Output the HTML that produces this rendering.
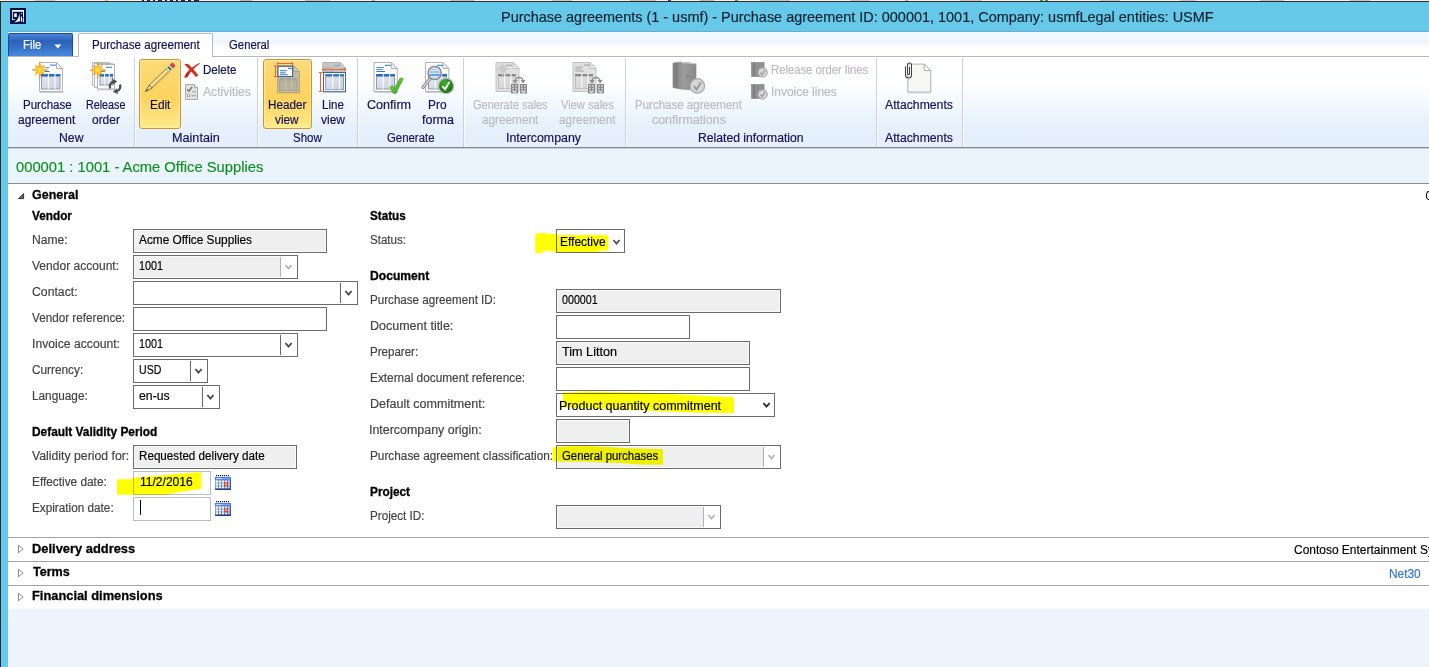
<!DOCTYPE html>
<html><head><meta charset="utf-8"><title>Purchase agreements</title>
<style>
html,body{margin:0;padding:0;}
body{width:1429px;height:667px;overflow:hidden;position:relative;background:#eef4fd;font-family:"Liberation Sans",sans-serif;}
.a{position:absolute;}
.t{position:absolute;white-space:pre;transform-origin:0 0;font-family:"Liberation Sans",sans-serif;}
.sep{position:absolute;top:58px;width:1px;height:89px;background:#ccd2da;box-shadow:1px 0 0 rgba(255,255,255,.75);}
.sep2{position:absolute;top:58px;width:1px;height:89px;background:rgba(255,255,255,.85);}
.fld{position:absolute;box-sizing:border-box;height:24px;border:1px solid #6b6b6b;background:#fff;}
.fld.d{background:#efefef;box-shadow:inset 0 0 0 1px #fafafa;}
.fld.lt{border-color:#b7bcc5;}
.vs{position:absolute;top:1px;width:1px;height:20px;background:#666;}
.wb{position:absolute;top:0;right:0;width:17px;height:22px;background:#fff;}
.vs.g{background:#aab2bb;}
.hl{position:absolute;left:0;top:0;}
.line{position:absolute;left:8px;width:1421px;height:1px;background:#a2a2a2;}
</style></head><body>
<!-- window chrome -->
<div class="a" style="left:0;top:0;width:1429px;height:1px;background:#f3f3f3"></div><div class="a" style="left:35px;top:0;width:20px;height:1px;background:#c8c8c8"></div><div class="a" style="left:105px;top:0;width:3px;height:1px;background:#e0c060"></div><div class="a" style="left:142px;top:0;width:2px;height:1px;background:#20206a"></div><div class="a" style="left:147px;top:0;width:3px;height:1px;background:#20206a"></div><div class="a" style="left:153px;top:0;width:2px;height:1px;background:#20206a"></div><div class="a" style="left:158px;top:0;width:4px;height:1px;background:#20206a"></div><div class="a" style="left:165px;top:0;width:2px;height:1px;background:#20206a"></div><div class="a" style="left:170px;top:0;width:3px;height:1px;background:#20206a"></div><div class="a" style="left:176px;top:0;width:2px;height:1px;background:#20206a"></div><div class="a" style="left:181px;top:0;width:4px;height:1px;background:#20206a"></div><div class="a" style="left:188px;top:0;width:3px;height:1px;background:#20206a"></div><div class="a" style="left:194px;top:0;width:5px;height:1px;background:#20206a"></div><div class="a" style="left:240px;top:0;width:12px;height:1px;background:#b8b8b8"></div><div class="a" style="left:305px;top:0;width:25px;height:1px;background:#c4c4c4"></div><div class="a" style="left:372px;top:0;width:3px;height:1px;background:#b0b0b0"></div><div class="a" style="left:450px;top:0;width:24px;height:1px;background:#c0c0c0"></div><div class="a" style="left:552px;top:0;width:20px;height:1px;background:#c6c6c6"></div><div class="a" style="left:630px;top:0;width:26px;height:1px;background:#c2c2c2"></div><div class="a" style="left:668px;top:0;width:3px;height:1px;background:#3a3a8a"></div><div class="a" style="left:700px;top:0;width:14px;height:1px;background:#bcbcbc"></div><div class="a" style="left:735px;top:0;width:3px;height:1px;background:#50a050"></div><div class="a" style="left:760px;top:0;width:30px;height:1px;background:#c4c4c4"></div><div class="a" style="left:850px;top:0;width:20px;height:1px;background:#c8c8c8"></div><div class="a" style="left:905px;top:0;width:3px;height:1px;background:#b0b0b0"></div><div class="a" style="left:960px;top:0;width:22px;height:1px;background:#c6c6c6"></div><div class="a" style="left:1040px;top:0;width:3px;height:1px;background:#40a040"></div><div class="a" style="left:1045px;top:0;width:3px;height:1px;background:#40a040"></div><div class="a" style="left:1100px;top:0;width:20px;height:1px;background:#c6c6c6"></div><div class="a" style="left:1180px;top:0;width:16px;height:1px;background:#c8c8c8"></div><div class="a" style="left:1260px;top:0;width:24px;height:1px;background:#c4c4c4"></div><div class="a" style="left:1350px;top:0;width:20px;height:1px;background:#c8c8c8"></div>
<div class="a" style="left:0;top:1px;width:1429px;height:1px;background:#332a2a"></div>
<div class="a" style="left:0;top:2px;width:1429px;height:30px;background:#66c9ea"></div>
<div class="a" style="left:0;top:2px;width:8px;height:665px;background:#66c9ea"></div>
<div class="a" style="left:0;top:1px;width:1px;height:666px;background:#332a2a"></div>
<div class="a" style="left:8px;top:31px;width:1421px;height:1px;background:#6aaed0"></div>
<!-- tab row -->
<div class="a" style="left:8px;top:32px;width:1421px;height:25px;background:linear-gradient(#eef7fe 0,#f3f6fc 45%,#fdfdfe 60%,#fefefe 100%)"></div>
<div class="a" style="left:8px;top:56px;width:1421px;height:1px;background:#b4b9c4"></div>
<!-- File button -->
<div class="a" style="left:8px;top:33px;width:65px;height:23px;box-sizing:border-box;border:1px solid #1d4aa0;border-bottom:none;border-radius:2px 2px 0 0;background:linear-gradient(#4a86d8 0,#3c76ca 14%,#2b62b8 32%,#3370c6 60%,#4282d7 88%,#4787dc 100%)"></div>
<svg class="a" style="left:53.6px;top:44px" width="8" height="5"><path d="M0.3 0.5h7L3.8 4.5z" fill="#fff"/></svg>
<!-- active tab -->
<div class="a" style="left:78px;top:33px;width:135px;height:25px;box-sizing:border-box;border:1px solid #b4b9c4;border-bottom:none;border-radius:2px 2px 0 0;background:#fff"></div>
<!-- ribbon -->
<div class="a" style="left:8px;top:57px;width:1421px;height:90px;background:linear-gradient(#ffffff 0,#fdfeff 30%,#f3f9fe 50%,#e8f2fc 72%,#e3effb 88%,#e5f0fb 100%)"></div>
<div class="a" style="left:79px;top:57px;width:133px;height:1px;background:#fff"></div>
<div class="a" style="left:8px;top:147px;width:1421px;height:1px;background:#7f8792"></div>
<div class="a" style="left:8px;top:148px;width:1421px;height:1px;background:#c9d0d9"></div>
<!-- separators -->
<div class="sep" style="left:134px"></div><div class="sep" style="left:257px"></div><div class="sep" style="left:357px"></div>
<div class="sep" style="left:463px"></div><div class="sep" style="left:625px"></div><div class="sep" style="left:876px"></div><div class="sep" style="left:962px"></div>
<!-- highlighted buttons -->
<div class="a" style="left:139px;top:59px;width:42px;height:70px;box-sizing:border-box;border:1px solid #c9953b;border-radius:3px;background:linear-gradient(#fddb7a 0,#fcd565 40%,#fcd35f 55%,#fde27a 85%,#fdeb8b 100%);box-shadow:inset 0 0 0 1px rgba(255,244,190,.55)"></div>
<div class="a" style="left:263px;top:59px;width:49px;height:70px;box-sizing:border-box;border:1px solid #c9953b;border-radius:3px;background:linear-gradient(#fddb7a 0,#fcd565 40%,#fcd35f 55%,#fde27a 85%,#fdeb8b 100%);box-shadow:inset 0 0 0 1px rgba(255,244,190,.55)"></div>
<!-- caption band -->
<div class="a" style="left:8px;top:149px;width:1421px;height:34px;background:#eaf4fd"></div>
<div class="a" style="left:8px;top:183px;width:1421px;height:1px;background:#8e8e8e"></div>
<!-- white panel -->
<div class="a" style="left:8px;top:184px;width:1421px;height:425px;background:#fff"></div>
<div class="line" style="top:537px"></div><div class="line" style="top:561px"></div><div class="line" style="top:585px"></div>
<!-- fasttab glyphs -->
<svg class="a" style="left:17px;top:192px" width="8" height="8"><path d="M6.6 1.6V6.6H1.6Z" fill="#6a6a6a" stroke="#333" stroke-width="1" stroke-linejoin="miter"/></svg>
<svg class="a" style="left:17px;top:544px" width="8" height="10"><path d="M1.5 1.2l4.6 3.8-4.6 3.8z" fill="#fff" stroke="#8a8a8a" stroke-width="1"/></svg>
<svg class="a" style="left:17px;top:568px" width="8" height="10"><path d="M1.5 1.2l4.6 3.8-4.6 3.8z" fill="#fff" stroke="#8a8a8a" stroke-width="1"/></svg>
<svg class="a" style="left:17px;top:592px" width="8" height="10"><path d="M1.5 1.2l4.6 3.8-4.6 3.8z" fill="#fff" stroke="#8a8a8a" stroke-width="1"/></svg>
<!-- fields left -->
<div class="fld d" style="left:133px;top:229px;width:194px"></div>
<div class="fld d" style="left:133px;top:255px;width:165px"><div class="wb"></div><div class="vs g" style="left:146px"></div></div>
<div class="fld" style="left:133px;top:281px;width:225px"><div class="vs" style="left:206px"></div></div>
<div class="fld" style="left:133px;top:307px;width:194px"></div>
<div class="fld" style="left:133px;top:333px;width:165px"><div class="vs" style="left:146px"></div></div>
<div class="fld" style="left:133px;top:359px;width:75px"><div class="vs" style="left:56px"></div></div>
<div class="fld" style="left:133px;top:385px;width:87px"><div class="vs" style="left:68px"></div></div>
<div class="fld d" style="left:133px;top:445px;width:164px"></div>
<div class="fld lt" style="left:133px;top:471px;width:78px"></div>
<div class="fld lt" style="left:133px;top:497px;width:78px"></div>
<div class="a" style="left:140px;top:500px;width:1px;height:15px;background:#000"></div>
<!-- fields right -->
<div class="fld" style="left:556px;top:229px;width:69px"></div>
<div class="fld d" style="left:556px;top:289px;width:225px"></div>
<div class="fld" style="left:556px;top:315px;width:134px"></div>
<div class="fld d" style="left:556px;top:341px;width:194px"></div>
<div class="fld" style="left:556px;top:367px;width:194px"></div>
<div class="fld" style="left:556px;top:393px;width:219px"></div>
<div class="fld d" style="left:556px;top:419px;width:74px"></div>
<div class="fld d" style="left:556px;top:445px;width:225px"><div class="wb"></div><div class="vs g" style="left:206px"></div></div>
<div class="fld d" style="left:556px;top:505px;width:165px"><div class="wb"></div><div class="vs g" style="left:146px"></div></div>
<!-- highlights -->
<svg class="hl" width="1429" height="667" style="mix-blend-mode:multiply">
<path d="M117 479.2 L133 479 L133 477.8 L165 475 L201.3 472 L201.3 488.8 L180 492 L165 494.7 L117 494.7Z" fill="#ffff00"/>
<path d="M535.2 234.4Q535.2 233.8 536 233.8H538V233H546V233.8H556.5V235H608.2V250.8H598V252.1H556.5V251.8H551V250.8H543.4V253H536Q535.2 253 535.2 252.4Z" fill="#ffff00"/>
<path d="M563 392.5 L585 391.5 L640 392.5 L690 395 L734 397.2 L734 413 L700 412.8 L655 411 L610 409 L563 407.5Z" fill="#ffff00"/>
<path d="M552.5 447.5 L575 445.8 L600 446.5 L630 448.3 L663 449.2 L663 464.8 L640 464.6 L620 463 L590 461.8 L552.5 461.5Z" fill="#ffff00"/>
</svg>
<svg width="0" height="0" style="position:absolute"><defs>
<linearGradient id="gTbl" x1="0" y1="0" x2="1" y2="1"><stop offset="0" stop-color="#e6eaf2"/><stop offset="1" stop-color="#c3cddd"/></linearGradient>
<linearGradient id="gTblG" x1="0" y1="0" x2="1" y2="1"><stop offset="0" stop-color="#e2e2e2"/><stop offset="1" stop-color="#cfcfcf"/></linearGradient>
<radialGradient id="gSun" cx="0.5" cy="0.5" r="0.5"><stop offset="0" stop-color="#ffe14a"/><stop offset="0.45" stop-color="#ffc21e"/><stop offset="1" stop-color="#f08c0a"/></radialGradient>
<linearGradient id="gChk" x1="0" y1="0" x2="1" y2="1"><stop offset="0" stop-color="#8be04a"/><stop offset="1" stop-color="#2f9a1a"/></linearGradient>
<radialGradient id="gGrn" cx="0.4" cy="0.3" r="0.8"><stop offset="0" stop-color="#3fae2a"/><stop offset="1" stop-color="#0f6a08"/></radialGradient>
<radialGradient id="gLens" cx="0.4" cy="0.35" r="0.7"><stop offset="0" stop-color="#f4f9ff"/><stop offset="1" stop-color="#b9d3f2"/></radialGradient>
<linearGradient id="gBook" x1="0" y1="0" x2="1" y2="0"><stop offset="0" stop-color="#7c7c7c"/><stop offset="0.45" stop-color="#9c9c9c"/><stop offset="1" stop-color="#8a8a8a"/></linearGradient>
<linearGradient id="gCal" x1="0" y1="0" x2="0" y2="1"><stop offset="0" stop-color="#7f9fe0"/><stop offset="1" stop-color="#3f5fb0"/></linearGradient>
<linearGradient id="gCalBody" x1="0" y1="0" x2="1" y2="1"><stop offset="0" stop-color="#9db6ec"/><stop offset="1" stop-color="#4c6cb4"/></linearGradient>
</defs></svg>
<svg class="a" style="left:32px;top:61px" width="32" height="33" viewBox="0 0 32 33" ><rect x="8" y="30.6" width="23.5" height="1.2" fill="#000" opacity=".22"/><path d="M7.5 1.5H24.5L30.5 7.5V30.5H7.5Z" fill="#fff" stroke="#b2b2b2"/><path d="M24.5 1.5V7.5H30.5Z" fill="#efefef" stroke="#b2b2b2" stroke-linejoin="round"/><rect x="18" y="3.6" width="6" height="1" fill="#2a78d6"/><rect x="12.5" y="6" width="4.5" height="1" fill="#6aa3e6"/><rect x="12.5" y="10" width="5" height="1" fill="#2a78d6"/><rect x="9" y="13" width="19.5" height="2" fill="#1f6ed0"/><rect x="9.5" y="15.5" width="18.5" height="12.5" fill="url(#gTbl)" stroke="#8f99ab"/><rect x="15.9" y="13" width="1" height="15.0" fill="#fff"/><rect x="22.5" y="13" width="1" height="15.0" fill="#fff"/><polygon points="7.80,0.63 8.99,6.02 12.43,4.27 10.68,7.71 16.07,8.90 10.68,10.09 12.43,13.53 8.99,11.78 7.80,17.17 6.61,11.78 3.17,13.53 4.92,10.09 -0.47,8.90 4.92,7.71 3.17,4.27 6.61,6.02" fill="url(#gSun)" stroke="#ee8a08" stroke-width="0.45" stroke-linejoin="round"/></svg>
<svg class="a" style="left:90px;top:61px" width="32" height="34" viewBox="0 0 32 34" ><rect x="2.5" y="1.5" width="17" height="23" fill="#fff" stroke="#bcbcbc"/><rect x="4.5" y="2.5" width="18" height="24" fill="#fff" stroke="#b8b8b8"/><rect x="8" y="28.2" width="17" height="1.1" fill="#000" opacity=".22"/><rect x="7.5" y="3.5" width="17" height="24.5" fill="#fff" stroke="#b2b2b2"/><rect x="16" y="5.8" width="6" height="1" fill="#2a78d6"/><rect x="11" y="9.8" width="4" height="1" fill="#2a78d6"/><rect x="9.5" y="13" width="13.5" height="2" fill="#1f6ed0"/><rect x="10.0" y="15.5" width="12.5" height="8.5" fill="url(#gTbl)" stroke="#8f99ab"/><rect x="14.1" y="13" width="1" height="11.0" fill="#fff"/><rect x="18.7" y="13" width="1" height="11.0" fill="#fff"/><polygon points="7.80,0.83 8.99,6.22 12.43,4.47 10.68,7.91 16.07,9.10 10.68,10.29 12.43,13.73 8.99,11.98 7.80,17.37 6.61,11.98 3.17,13.73 4.92,10.29 -0.47,9.10 4.92,7.91 3.17,4.47 6.61,6.22" fill="url(#gSun)" stroke="#ee8a08" stroke-width="0.45" stroke-linejoin="round"/><g fill="none" stroke="#505050" stroke-width="2.3" stroke-linecap="butt"><path d="M20.2 27.6A5 5 0 0 1 23.6 20.6"/><path d="M29.8 23.4A5 5 0 0 1 26.4 30.4"/></g><path d="M22.2 17.8l5 2.5-4.2 3.5z" fill="#505050"/><path d="M27.8 33.2l-5-2.5 4.2-3.5z" fill="#505050"/></svg>
<svg class="a" style="left:143px;top:61px" width="36" height="34" viewBox="0 0 36 34" ><g transform="translate(2.5,30.6) rotate(-44)"><path d="M0 0L7 -2.05H7.6V2.05H7Z" fill="#f3d3a2" stroke="#5b4a2a" stroke-width=".7" stroke-linejoin="round"/><path d="M0 0L2.6 -0.8V0.8Z" fill="#33302a"/><rect x="7.4" y="-2.05" width="23.6" height="4.1" fill="#fbe9a6" stroke="#5b4a2a" stroke-width=".7"/><rect x="7.6" y="0.2" width="23.2" height="1.5" fill="#e8c25a"/><rect x="30.8" y="-2.2" width="1.9" height="4.4" fill="#e4e4e4" stroke="#777" stroke-width=".4"/><rect x="32.6" y="-2.2" width="2" height="4.4" fill="#1f7d42"/><rect x="34.5" y="-2.2" width="1.5" height="4.4" fill="#e9e9e9"/><path d="M35.9 -2.2H38.2a1.4 1.4 0 0 1 1.4 1.4V.8A1.4 1.4 0 0 1 38.2 2.2H35.9Z" fill="#d4475c" stroke="#8a3040" stroke-width=".4"/></g></svg>
<svg class="a" style="left:183px;top:62px" width="18" height="17" viewBox="0 0 18 17" ><path d="M1.4 2.4C2.8 1.2 4.8 1.6 6.2 3C9.2 5.8 12 9 15.2 13.2C14.8 14.4 13.4 15 12.4 14.6C9.6 10.8 6.2 6.8 1.4 2.4Z" fill="#d8301c"/><path d="M16.6 1C11.6 3 6.8 6.8 3.6 10.8C2.4 12.4 1.6 14 1.4 15.4C2.4 16.2 4 15.8 4.8 14.8C6.8 10.8 10.6 5.8 16.8 1.8Z" fill="#cc2216"/><path d="M15.6 1.9C11.6 3.9 8.2 6.9 5.6 10" fill="none" stroke="#f08068" stroke-width=".7" opacity=".75"/></svg>
<svg class="a" style="left:185px;top:84px" width="14" height="17" viewBox="0 0 14 17" ><path d="M.5 .5H9.5L12.5 3.5V15.5H.5Z" fill="#e2e2e2" stroke="#a9a9a9"/><path d="M9.5 .5V3.5H12.5" fill="#f1f1f1" stroke="#a9a9a9"/><path d="M2.2 5.4l1.7 1.9L7.2 2.6" fill="none" stroke="#7e7e7e" stroke-width="1.6"/><rect x="7.3" y="7.2" width="3.6" height="1.1" fill="#a4a4a4"/><rect x="2.5" y="10.5" width="2.2" height="2.2" fill="#f4f4f4" stroke="#a4a4a4" stroke-width=".8"/><rect x="6.6" y="11.2" width="4.2" height="1.1" fill="#a4a4a4"/></svg>
<svg class="a" style="left:273px;top:61px" width="30" height="33" viewBox="0 0 30 33" ><rect x="5.4" y="31.4" width="21.6" height="1.1" fill="#6b5a20" opacity=".25"/><path d="M4.5 4.5H20.5L26.5 10.5V31.5H4.5Z" fill="#bfb9a2" stroke="#aaa48c" opacity=".9"/><path d="M20.5 4.5V10.5H26.5Z" fill="#d2cdb8" stroke="#aaa48c" opacity=".9"/><rect x="6.5" y="17" width="17.5" height="1.7" fill="#8e98a4" opacity=".8"/><rect x="6.5" y="19" width="17.5" height="10.5" fill="#b9b39c" stroke="#a59f88" stroke-width=".8"/><rect x="12.2" y="17" width="1" height="12.2" fill="#cbc5ac"/><rect x="18.2" y="17" width="1" height="12.2" fill="#cbc5ac"/><rect x="5" y="5.3" width="14.6" height="10.2" fill="#fff" stroke="#44648f" stroke-width="1.1"/><rect x="15" y="6.8" width="3.6" height="1.1" fill="#2a78d6"/><rect x="7" y="9.2" width="6.8" height="1" fill="#2a78d6"/><rect x="7" y="11.3" width="5.6" height="1" fill="#2a78d6"/><rect x="7" y="13.2" width="7.6" height="1" fill="#2a78d6"/><g stroke="#f0622a" stroke-width="1" fill="none"><path d="M4.3 2.5H19.8M4.5 1V4M19.5 1V4"/><path d="M2.5 4.8V15.8M1 5H4M1 15.6H4"/></g></svg>
<svg class="a" style="left:318px;top:61px" width="30" height="33" viewBox="0 0 30 33" ><path d="M4.8 1.5H22L27.5 7V12H4.8Z" fill="#c6c6c6" stroke="#b2b2b2"/><path d="M22 1.5V7H27.5Z" fill="#d8d8d8" stroke="#b2b2b2"/><rect x="16.5" y="4" width="5" height="1.1" fill="#7fa0cc"/><rect x="7.5" y="6.2" width="8" height="1" fill="#a4b6cc"/><rect x="6.5" y="10" width="10" height="1" fill="#aeb6c0"/><path d="M4.5 8.5H27.8" stroke="#f0622a" stroke-width="1.1"/><path d="M4 8.5l2.2-1.6v3.2zM28.2 8.5l-2.2-1.6v3.2z" fill="#f0622a"/><g stroke="#f0622a" stroke-width="1" fill="none"><path d="M2.5 11.4V30.6M0.8 11.5H4.3M0.8 30.5H4.3"/></g><rect x="6" y="31" width="22" height="1" fill="#000" opacity=".15"/><rect x="5.5" y="11.5" width="22" height="19.2" fill="#fff" stroke="#456590" stroke-width="1"/><rect x="7.2" y="13.2" width="18.8" height="2" fill="#1f6ed0"/><rect x="7.7" y="15.7" width="17.8" height="13" fill="url(#gTbl)" stroke="#8f99ab"/><rect x="14.2" y="13.2" width="1" height="15.5" fill="#fff"/><rect x="21.0" y="13.2" width="1" height="15.5" fill="#fff"/></svg>
<svg class="a" style="left:373px;top:61px" width="32" height="34" viewBox="0 0 32 34" ><rect x="1.5" y="30.6" width="23.5" height="1.2" fill="#000" opacity=".22"/><path d="M1.0 1.5H18.3L24.3 7.5V30.5H1.0Z" fill="#fff" stroke="#b2b2b2"/><path d="M18.3 1.5V7.5H24.3Z" fill="#efefef" stroke="#b2b2b2" stroke-linejoin="round"/><rect x="12" y="3.8" width="6" height="1" fill="#2a78d6"/><rect x="3.2" y="6" width="7.8" height="1" fill="#4b8fdf"/><rect x="3.2" y="8" width="6.4" height="1" fill="#4b8fdf"/><rect x="3.2" y="10" width="8.8" height="1" fill="#2a78d6"/><rect x="3" y="13" width="19" height="2" fill="#1f6ed0"/><rect x="3.5" y="15.5" width="18" height="12.5" fill="url(#gTbl)" stroke="#8f99ab"/><rect x="9.7" y="13" width="1" height="15.0" fill="#fff"/><rect x="16.2" y="13" width="1" height="15.0" fill="#fff"/><path d="M16.6 26.4l2.6-2 2.2 3.2 5.6-10.6 3.4.4-7.6 15.2h-2.4z" fill="url(#gChk)" stroke="#2f8f1c" stroke-width=".5" stroke-linejoin="round"/></svg>
<svg class="a" style="left:421px;top:61px" width="34" height="34" viewBox="0 0 34 34" ><rect x="5" y="30.6" width="23.5" height="1.2" fill="#000" opacity=".22"/><path d="M4.5 1.5H21.8L27.8 7.5V30.5H4.5Z" fill="#fff" stroke="#b2b2b2"/><path d="M21.8 1.5V7.5H27.8Z" fill="#efefef" stroke="#b2b2b2" stroke-linejoin="round"/><rect x="16" y="3.8" width="6" height="1" fill="#2a78d6"/><rect x="7" y="13" width="19" height="2" fill="#1f6ed0"/><rect x="7.5" y="15.5" width="18" height="12.5" fill="url(#gTbl)" stroke="#8f99ab"/><rect x="13.7" y="13" width="1" height="15.0" fill="#fff"/><rect x="20.2" y="13" width="1" height="15.0" fill="#fff"/><path d="M2 26.6L9.6 17" stroke="#8a8a8a" stroke-width="3.2" stroke-linecap="round"/><path d="M2 26.6L9.6 17" stroke="#d8d8d8" stroke-width="1.4" stroke-linecap="round"/><circle cx="13.7" cy="12" r="6.6" fill="url(#gLens)" stroke="#8c8c8c" stroke-width="1.5" fill-opacity=".92"/><rect x="9" y="8.2" width="7" height="1" fill="#8fb7ea"/><rect x="8.6" y="10.4" width="9.5" height="1.2" fill="#6ea3e6"/><rect x="8.6" y="13" width="10.2" height="1.8" fill="#5e98e2"/><circle cx="25" cy="25" r="7.6" fill="url(#gGrn)" stroke="#b9b9b9" stroke-width="1.3"/><path d="M21.4 25l2.6 3.4 4.4-7.4" fill="none" stroke="#fff" stroke-width="1.9"/></svg>
<svg class="a" style="left:495px;top:61px" width="33" height="34" viewBox="0 0 33 34" ><path d="M1.0 1.5H18.0L24.0 7.5V30.5H1.0Z" fill="#e1e1e1" stroke="#c2c2c2"/><path d="M18.0 1.5V7.5H24.0Z" fill="#ededed" stroke="#c2c2c2" stroke-linejoin="round"/><rect x="11" y="3.8" width="6" height="1" fill="#a5a5a5"/><rect x="3" y="13" width="18" height="2" fill="#8c8c8c"/><rect x="3.5" y="15.5" width="17" height="12" fill="url(#gTblG)" stroke="#bdbdbd"/><rect x="9.3" y="13" width="1" height="14.5" fill="#fff"/><rect x="15.5" y="13" width="1" height="14.5" fill="#fff"/><polygon points="7.50,1.20 8.51,5.76 11.42,4.28 9.94,7.19 14.50,8.20 9.94,9.21 11.42,12.12 8.51,10.64 7.50,15.20 6.49,10.64 3.58,12.12 5.06,9.21 0.50,8.20 5.06,7.19 3.58,4.28 6.49,5.76" fill="#cbcbcb" stroke="#c4c4c4" stroke-width="0.45" stroke-linejoin="round"/><g fill="none" stroke="#8c8c8c" stroke-width="1.4"><path d="M20.1 20.5A4 4 0 0 1 28.1 20.5"/></g><path d="M17.6 19.1h5l-2.5 3.4zM25.6 19.1h5l-2.5 3.4z" fill="#8c8c8c"/><rect x="16" y="23" width="7" height="9.4" fill="#868686"/><rect x="17" y="24.0" width="2" height="1.7" fill="#c8c8c8"/><rect x="20" y="24.0" width="2" height="1.7" fill="#c8c8c8"/><rect x="17" y="26.7" width="2" height="1.7" fill="#c8c8c8"/><rect x="20" y="26.7" width="2" height="1.7" fill="#c8c8c8"/><rect x="17" y="29.4" width="2" height="1.7" fill="#c8c8c8"/><rect x="20" y="29.4" width="2" height="1.7" fill="#c8c8c8"/><rect x="18.5" y="30" width="2" height="2.4" fill="#d9d9d9"/><rect x="25" y="23" width="7" height="9.4" fill="#868686"/><rect x="26" y="24.0" width="2" height="1.7" fill="#c8c8c8"/><rect x="29" y="24.0" width="2" height="1.7" fill="#c8c8c8"/><rect x="26" y="26.7" width="2" height="1.7" fill="#c8c8c8"/><rect x="29" y="26.7" width="2" height="1.7" fill="#c8c8c8"/><rect x="26" y="29.4" width="2" height="1.7" fill="#c8c8c8"/><rect x="29" y="29.4" width="2" height="1.7" fill="#c8c8c8"/><rect x="27.5" y="30" width="2" height="2.4" fill="#d9d9d9"/></svg>
<svg class="a" style="left:572px;top:61px" width="33" height="34" viewBox="0 0 33 34" ><path d="M1.0 1.5H18.0L24.0 7.5V30.5H1.0Z" fill="#e1e1e1" stroke="#c2c2c2"/><path d="M18.0 1.5V7.5H24.0Z" fill="#ededed" stroke="#c2c2c2" stroke-linejoin="round"/><rect x="12" y="3.6" width="6" height="1" fill="#9a9a9a"/><rect x="3.2" y="5.6" width="7.8" height="1" fill="#a9a9a9"/><rect x="3.2" y="7.6" width="6.4" height="1" fill="#a9a9a9"/><rect x="3.2" y="9.6" width="8.8" height="1" fill="#a9a9a9"/><rect x="3" y="13" width="18" height="2" fill="#8c8c8c"/><rect x="3.5" y="15.5" width="17" height="12" fill="url(#gTblG)" stroke="#bdbdbd"/><rect x="9.3" y="13" width="1" height="14.5" fill="#fff"/><rect x="15.5" y="13" width="1" height="14.5" fill="#fff"/><g fill="none" stroke="#8c8c8c" stroke-width="1.4"><path d="M20.1 20.5A4 4 0 0 1 28.1 20.5"/></g><path d="M17.6 19.1h5l-2.5 3.4zM25.6 19.1h5l-2.5 3.4z" fill="#8c8c8c"/><rect x="16" y="23" width="7" height="9.4" fill="#868686"/><rect x="17" y="24.0" width="2" height="1.7" fill="#c8c8c8"/><rect x="20" y="24.0" width="2" height="1.7" fill="#c8c8c8"/><rect x="17" y="26.7" width="2" height="1.7" fill="#c8c8c8"/><rect x="20" y="26.7" width="2" height="1.7" fill="#c8c8c8"/><rect x="17" y="29.4" width="2" height="1.7" fill="#c8c8c8"/><rect x="20" y="29.4" width="2" height="1.7" fill="#c8c8c8"/><rect x="18.5" y="30" width="2" height="2.4" fill="#d9d9d9"/><rect x="25" y="23" width="7" height="9.4" fill="#868686"/><rect x="26" y="24.0" width="2" height="1.7" fill="#c8c8c8"/><rect x="29" y="24.0" width="2" height="1.7" fill="#c8c8c8"/><rect x="26" y="26.7" width="2" height="1.7" fill="#c8c8c8"/><rect x="29" y="26.7" width="2" height="1.7" fill="#c8c8c8"/><rect x="26" y="29.4" width="2" height="1.7" fill="#c8c8c8"/><rect x="29" y="29.4" width="2" height="1.7" fill="#c8c8c8"/><rect x="27.5" y="30" width="2" height="2.4" fill="#d9d9d9"/></svg>
<svg class="a" style="left:672px;top:61px" width="34" height="34" viewBox="0 0 34 34" ><path d="M1 2L9.049999999999999 1L24 2.6V29L10.200000000000001 28.2L1 26.6Z" fill="url(#gBook)" stroke="#858585" stroke-width=".6"/><path d="M4.68 1.8V27.4" stroke="#7a7a7a" stroke-width="1.4"/><path d="M9.049999999999999 1.4L24 2.8" stroke="#d5d5d5" stroke-width="1"/><path d="M13 15.5l3-2.6v1.6h4v2h-4v1.6z" fill="#8a8a8a"/><circle cx="25.4" cy="24.9" r="7.2" fill="#d6d6d6" stroke="#a9a9a9" stroke-width="1.2"/><path d="M21.944 25.099999999999998l2.592 3.3120000000000003 4.464-7.2" fill="none" stroke="#9a9a9a" stroke-width="2.02"/></svg>
<svg class="a" style="left:751px;top:62px" width="18" height="17" viewBox="0 0 18 17" ><rect x=".5" y=".5" width="12.6" height="14" fill="#8f8f8f" stroke="#808080" stroke-width=".6"/><rect x="2.2" y=".5" width="1.4" height="14" fill="#7a7a7a"/><circle cx="11.6" cy="10.4" r="4.6" fill="#d6d6d6" stroke="#a9a9a9" stroke-width="1.2"/><path d="M9.392 10.6l1.656 2.116 2.852-4.6" fill="none" stroke="#9a9a9a" stroke-width="1.29"/></svg>
<svg class="a" style="left:751px;top:84px" width="18" height="17" viewBox="0 0 18 17" ><rect x=".5" y=".5" width="12.6" height="14" fill="#8f8f8f" stroke="#808080" stroke-width=".6"/><rect x="2.2" y=".5" width="1.4" height="14" fill="#7a7a7a"/><circle cx="11.6" cy="10.4" r="4.6" fill="#d6d6d6" stroke="#a9a9a9" stroke-width="1.2"/><path d="M9.392 10.6l1.656 2.116 2.852-4.6" fill="none" stroke="#9a9a9a" stroke-width="1.29"/></svg>
<svg class="a" style="left:903px;top:60px" width="32" height="35" viewBox="0 0 32 35" ><rect x="5" y="32.6" width="23" height="1" fill="#000" opacity=".12"/><path d="M4.8 4.1H21.3L27.8 10.6V32.1H4.8Z" fill="#f6f6f4" stroke="#b0b0b0"/><path d="M21.3 4.1V10.6H27.8Z" fill="#fff" stroke="#b0b0b0" stroke-linejoin="round"/><path d="M2.5 6.5V14.9A3 3 0 0 0 8.5 14.9V4.9A2 2 0 0 0 4.5 4.9V13.6A1 1 0 0 0 6.5 13.6V7" fill="none" stroke="#fff" stroke-width="2.2" opacity=".7"/><path d="M2.5 6.5V14.9A3 3 0 0 0 8.5 14.9V4.9A2 2 0 0 0 4.5 4.9V13.6A1 1 0 0 0 6.5 13.6V7" fill="none" stroke="#404040" stroke-width="1.05"/></svg>
<svg class="a" style="left:215px;top:475px" width="16" height="15" viewBox="0 0 16 15" ><rect x="1" y="0" width="1.1" height="1.6" fill="#111"/><rect x="1" y="1.4" width="1.1" height="1" fill="#fff"/><rect x="3" y="0" width="1.1" height="1.6" fill="#111"/><rect x="3" y="1.4" width="1.1" height="1" fill="#fff"/><rect x="5" y="0" width="1.1" height="1.6" fill="#111"/><rect x="5" y="1.4" width="1.1" height="1" fill="#fff"/><rect x="7" y="0" width="1.1" height="1.6" fill="#111"/><rect x="7" y="1.4" width="1.1" height="1" fill="#fff"/><rect x="9" y="0" width="1.1" height="1.6" fill="#111"/><rect x="9" y="1.4" width="1.1" height="1" fill="#fff"/><rect x="11" y="0" width="1.1" height="1.6" fill="#111"/><rect x="11" y="1.4" width="1.1" height="1" fill="#fff"/><rect x="13" y="0" width="1.1" height="1.6" fill="#111"/><rect x="13" y="1.4" width="1.1" height="1" fill="#fff"/><rect x="0" y="2" width="16" height="13" fill="url(#gCalBody)"/><rect x="0" y="2" width="16" height="3" fill="#4a7be6"/><rect x="1" y="3.2" width="6" height=".9" fill="#e8f0ff"/><rect x="7" y="3.2" width="8" height=".9" fill="#8fb0f2"/><rect x="1" y="5.6" width="2" height="2" fill="#fff" opacity="1"/><rect x="4" y="5.6" width="2" height="2" fill="#fff" opacity="1"/><rect x="7" y="5.6" width="2" height="2" fill="#fff" opacity="1"/><rect x="10" y="5.6" width="2" height="2" fill="#fff" opacity="0.85"/><rect x="13" y="5.6" width="2" height="2" fill="#fff" opacity="0.6"/><rect x="1" y="8.5" width="2" height="2" fill="#fff" opacity="1"/><rect x="4" y="8.5" width="2" height="2" fill="#fff" opacity="1"/><rect x="7" y="8.5" width="2" height="2" fill="#fff" opacity="1"/><rect x="10" y="8.5" width="2" height="2" fill="#fff" opacity="0.85"/><rect x="13" y="8.5" width="2" height="2" fill="#fff" opacity="0.6"/><rect x="1" y="11.4" width="2" height="2" fill="#fff" opacity="1"/><rect x="4" y="11.4" width="2" height="2" fill="#fff" opacity="1"/><rect x="7" y="11.4" width="2" height="2" fill="#fff" opacity="1"/><rect x="10" y="11.4" width="2" height="2" fill="#fff" opacity="0.85"/><rect x="13" y="11.4" width="2" height="2" fill="#fff" opacity="0.6"/><rect x="9" y="7.3" width="4" height="4" fill="#e8421e"/><rect x="10.2" y="8.5" width="1.6" height="1.6" fill="#eaf2ff"/><rect x="0.3" y="13.6" width="15.7" height="1.4" fill="#233f80"/><rect x="15" y="5" width="1" height="9" fill="#233f80" opacity=".7"/></svg>
<svg class="a" style="left:215px;top:501px" width="16" height="15" viewBox="0 0 16 15" ><rect x="1" y="0" width="1.1" height="1.6" fill="#111"/><rect x="1" y="1.4" width="1.1" height="1" fill="#fff"/><rect x="3" y="0" width="1.1" height="1.6" fill="#111"/><rect x="3" y="1.4" width="1.1" height="1" fill="#fff"/><rect x="5" y="0" width="1.1" height="1.6" fill="#111"/><rect x="5" y="1.4" width="1.1" height="1" fill="#fff"/><rect x="7" y="0" width="1.1" height="1.6" fill="#111"/><rect x="7" y="1.4" width="1.1" height="1" fill="#fff"/><rect x="9" y="0" width="1.1" height="1.6" fill="#111"/><rect x="9" y="1.4" width="1.1" height="1" fill="#fff"/><rect x="11" y="0" width="1.1" height="1.6" fill="#111"/><rect x="11" y="1.4" width="1.1" height="1" fill="#fff"/><rect x="13" y="0" width="1.1" height="1.6" fill="#111"/><rect x="13" y="1.4" width="1.1" height="1" fill="#fff"/><rect x="0" y="2" width="16" height="13" fill="url(#gCalBody)"/><rect x="0" y="2" width="16" height="3" fill="#4a7be6"/><rect x="1" y="3.2" width="6" height=".9" fill="#e8f0ff"/><rect x="7" y="3.2" width="8" height=".9" fill="#8fb0f2"/><rect x="1" y="5.6" width="2" height="2" fill="#fff" opacity="1"/><rect x="4" y="5.6" width="2" height="2" fill="#fff" opacity="1"/><rect x="7" y="5.6" width="2" height="2" fill="#fff" opacity="1"/><rect x="10" y="5.6" width="2" height="2" fill="#fff" opacity="0.85"/><rect x="13" y="5.6" width="2" height="2" fill="#fff" opacity="0.6"/><rect x="1" y="8.5" width="2" height="2" fill="#fff" opacity="1"/><rect x="4" y="8.5" width="2" height="2" fill="#fff" opacity="1"/><rect x="7" y="8.5" width="2" height="2" fill="#fff" opacity="1"/><rect x="10" y="8.5" width="2" height="2" fill="#fff" opacity="0.85"/><rect x="13" y="8.5" width="2" height="2" fill="#fff" opacity="0.6"/><rect x="1" y="11.4" width="2" height="2" fill="#fff" opacity="1"/><rect x="4" y="11.4" width="2" height="2" fill="#fff" opacity="1"/><rect x="7" y="11.4" width="2" height="2" fill="#fff" opacity="1"/><rect x="10" y="11.4" width="2" height="2" fill="#fff" opacity="0.85"/><rect x="13" y="11.4" width="2" height="2" fill="#fff" opacity="0.6"/><rect x="9" y="7.3" width="4" height="4" fill="#e8421e"/><rect x="10.2" y="8.5" width="1.6" height="1.6" fill="#eaf2ff"/><rect x="0.3" y="13.6" width="15.7" height="1.4" fill="#233f80"/><rect x="15" y="5" width="1" height="9" fill="#233f80" opacity=".7"/></svg>
<svg class="a" style="left:10px;top:8px" width="16" height="16" viewBox="0 0 16 16" ><rect width="16" height="16" fill="#00124d"/><path d="M2 2H14V9.4H13V3.8H2.8V11.2H5V12H2Z" fill="#fff"/><rect x="4.2" y="5.4" width="2.6" height="3.6" fill="#fff"/><path d="M3.2 14.6C6.4 13.6 8.6 10.8 9.4 5.2C9.8 8.6 10 11.4 10 13.2C7.6 13.6 5.4 14.2 3.2 14.6Z" fill="#fff"/><circle cx="11.4" cy="5.6" r=".7" fill="#fff"/><rect x="10.9" y="8.6" width="1.1" height="5" fill="#fff"/><rect x="12.8" y="10.2" width="1.1" height="4" fill="#fff"/></svg>
<svg class="a" style="left:284px;top:264.3px" width="9" height="7" viewBox="0 0 9 7" ><path d="M1.4 1L4.5 4.6 7.6 1" fill="none" stroke="#b4b4b4" stroke-width="1.7"/></svg>
<svg class="a" style="left:344px;top:290.3px" width="9" height="7" viewBox="0 0 9 7" ><path d="M1.4 1L4.5 4.6 7.6 1" fill="none" stroke="#4a4a4a" stroke-width="1.9"/></svg>
<svg class="a" style="left:284px;top:342.3px" width="9" height="7" viewBox="0 0 9 7" ><path d="M1.4 1L4.5 4.6 7.6 1" fill="none" stroke="#4a4a4a" stroke-width="1.9"/></svg>
<svg class="a" style="left:194px;top:368.3px" width="9" height="7" viewBox="0 0 9 7" ><path d="M1.4 1L4.5 4.6 7.6 1" fill="none" stroke="#4a4a4a" stroke-width="1.9"/></svg>
<svg class="a" style="left:206px;top:394.3px" width="9" height="7" viewBox="0 0 9 7" ><path d="M1.4 1L4.5 4.6 7.6 1" fill="none" stroke="#4a4a4a" stroke-width="1.9"/></svg>
<svg class="a" style="left:612px;top:239.3px" width="9" height="7" viewBox="0 0 9 7" ><path d="M1.4 1L4.5 4.6 7.6 1" fill="none" stroke="#555" stroke-width="1.9"/></svg>
<svg class="a" style="left:762px;top:402.3px" width="9" height="7" viewBox="0 0 9 7" ><path d="M1.4 1L4.5 4.6 7.6 1" fill="none" stroke="#2a2a2a" stroke-width="1.9"/></svg>
<svg class="a" style="left:767px;top:454.3px" width="9" height="7" viewBox="0 0 9 7" ><path d="M1.4 1L4.5 4.6 7.6 1" fill="none" stroke="#b4b4b4" stroke-width="1.7"/></svg>
<svg class="a" style="left:707px;top:514.3px" width="9" height="7" viewBox="0 0 9 7" ><path d="M1.4 1L4.5 4.6 7.6 1" fill="none" stroke="#b4b4b4" stroke-width="1.7"/></svg>

<span class="t" style="left:500.92px;top:7px;font-size:15px;line-height:19px;-webkit-text-stroke:0.18px;color:#10222e;transform:scaleX(0.9636)">Purchase agreements (1 - usmf) - Purchase agreement ID: 000001, 1001, Company: usmfLegal entities: USMF</span>
<span class="t" style="left:22.96px;top:37px;font-size:12px;line-height:16px;-webkit-text-stroke:0.18px;color:#ffffff;transform:scaleX(0.9440)">File</span>
<span class="t" style="left:91.64px;top:37px;font-size:12px;line-height:16px;-webkit-text-stroke:0.18px;color:#121258;transform:scaleX(0.9671)">Purchase agreement</span>
<span class="t" style="left:229.03px;top:37px;font-size:12px;line-height:16px;-webkit-text-stroke:0.18px;color:#121258;transform:scaleX(0.9457)">General</span>
<span class="t" style="left:22.65px;top:97px;font-size:12px;line-height:16px;-webkit-text-stroke:0.18px;color:#121258;transform:scaleX(0.9586)">Purchase</span>
<span class="t" style="left:17.77px;top:112px;font-size:12px;line-height:16px;-webkit-text-stroke:0.18px;color:#121258;transform:scaleX(0.9982)">agreement</span>
<span class="t" style="left:85.90px;top:97px;font-size:12px;line-height:16px;-webkit-text-stroke:0.18px;color:#121258;transform:scaleX(0.8951)">Release</span>
<span class="t" style="left:92.20px;top:112px;font-size:12px;line-height:16px;-webkit-text-stroke:0.18px;color:#121258;transform:scaleX(0.9943)">order</span>
<span class="t" style="left:149.58px;top:97px;font-size:12px;line-height:16px;-webkit-text-stroke:0.18px;color:#121258;transform:scaleX(0.9859)">Edit</span>
<span class="t" style="left:202.85px;top:62px;font-size:12px;line-height:16px;-webkit-text-stroke:0.18px;color:#121258;transform:scaleX(0.9627)">Delete</span>
<span class="t" style="left:203.47px;top:84px;font-size:12px;line-height:16px;-webkit-text-stroke:0.18px;color:#bcbabf;transform:scaleX(1.0087)">Activities</span>
<span class="t" style="left:267.94px;top:97px;font-size:12px;line-height:16px;-webkit-text-stroke:0.18px;color:#121258;transform:scaleX(0.9753)">Header</span>
<span class="t" style="left:275.37px;top:112px;font-size:12px;line-height:16px;-webkit-text-stroke:0.18px;color:#121258;transform:scaleX(0.9807)">view</span>
<span class="t" style="left:321.85px;top:97px;font-size:12px;line-height:16px;-webkit-text-stroke:0.18px;color:#121258;transform:scaleX(0.9605)">Line</span>
<span class="t" style="left:320.87px;top:112px;font-size:12px;line-height:16px;-webkit-text-stroke:0.18px;color:#121258;transform:scaleX(0.9973)">view</span>
<span class="t" style="left:366.98px;top:97px;font-size:12px;line-height:16px;-webkit-text-stroke:0.18px;color:#121258;transform:scaleX(1.0491)">Confirm</span>
<span class="t" style="left:428.47px;top:97px;font-size:12px;line-height:16px;-webkit-text-stroke:0.18px;color:#121258;transform:scaleX(0.9922)">Pro</span>
<span class="t" style="left:422.03px;top:112px;font-size:12px;line-height:16px;-webkit-text-stroke:0.18px;color:#121258;transform:scaleX(1.0440)">forma</span>
<span class="t" style="left:473.14px;top:97px;font-size:12px;line-height:16px;-webkit-text-stroke:0.18px;color:#bcbabf;transform:scaleX(0.9160)">Generate sales</span>
<span class="t" style="left:482.08px;top:112px;font-size:12px;line-height:16px;-webkit-text-stroke:0.18px;color:#bcbabf;transform:scaleX(0.9807)">agreement</span>
<span class="t" style="left:560.93px;top:97px;font-size:12px;line-height:16px;-webkit-text-stroke:0.18px;color:#bcbabf;transform:scaleX(0.9245)">View sales</span>
<span class="t" style="left:558.93px;top:112px;font-size:12px;line-height:16px;-webkit-text-stroke:0.18px;color:#bcbabf;transform:scaleX(0.9859)">agreement</span>
<span class="t" style="left:635.10px;top:97px;font-size:12px;line-height:16px;-webkit-text-stroke:0.18px;color:#bcbabf;transform:scaleX(0.9598)">Purchase agreement</span>
<span class="t" style="left:652.28px;top:112px;font-size:12px;line-height:16px;-webkit-text-stroke:0.18px;color:#bcbabf;transform:scaleX(1.0353)">confirmations</span>
<span class="t" style="left:770.97px;top:62px;font-size:12px;line-height:16px;-webkit-text-stroke:0.18px;color:#bcbabf;transform:scaleX(0.9395)">Release order lines</span>
<span class="t" style="left:770.65px;top:84px;font-size:12px;line-height:16px;-webkit-text-stroke:0.18px;color:#bcbabf;transform:scaleX(0.9938)">Invoice lines</span>
<span class="t" style="left:885.27px;top:97px;font-size:12px;line-height:16px;-webkit-text-stroke:0.18px;color:#121258;transform:scaleX(1.0184)">Attachments</span>
<span class="t" style="left:58.55px;top:130px;font-size:12px;line-height:16px;-webkit-text-stroke:0.18px;color:#121258;transform:scaleX(1.0208)">New</span>
<span class="t" style="left:172.48px;top:130px;font-size:12px;line-height:16px;-webkit-text-stroke:0.18px;color:#121258;transform:scaleX(1.0525)">Maintain</span>
<span class="t" style="left:292.59px;top:130px;font-size:12px;line-height:16px;-webkit-text-stroke:0.18px;color:#121258;transform:scaleX(0.9591)">Show</span>
<span class="t" style="left:386.78px;top:130px;font-size:12px;line-height:16px;-webkit-text-stroke:0.18px;color:#121258;transform:scaleX(0.9495)">Generate</span>
<span class="t" style="left:506.11px;top:130px;font-size:12px;line-height:16px;-webkit-text-stroke:0.18px;color:#121258;transform:scaleX(1.0311)">Intercompany</span>
<span class="t" style="left:697.61px;top:130px;font-size:12px;line-height:16px;-webkit-text-stroke:0.18px;color:#121258;transform:scaleX(1.0148)">Related information</span>
<span class="t" style="left:885.27px;top:130px;font-size:12px;line-height:16px;-webkit-text-stroke:0.18px;color:#121258;transform:scaleX(1.0184)">Attachments</span>
<span class="t" style="left:15.95px;top:157px;font-size:15px;line-height:19px;-webkit-text-stroke:0.18px;color:#12901f;transform:scaleX(0.9830)">000001 : 1001 - Acme Office Supplies</span>
<span class="t" style="left:32.16px;top:186px;font-size:13.33px;line-height:17px;font-weight:700;-webkit-text-stroke:0.3px #000;color:#000000;transform:scaleX(0.9355)">General</span>
<span class="t" style="left:31.88px;top:540px;font-size:13.33px;line-height:17px;font-weight:700;-webkit-text-stroke:0.3px #000;color:#000000;transform:scaleX(0.9667)">Delivery address</span>
<span class="t" style="left:32.50px;top:563px;font-size:13.33px;line-height:17px;font-weight:700;-webkit-text-stroke:0.3px #000;color:#000000;transform:scaleX(0.9429)">Terms</span>
<span class="t" style="left:31.88px;top:587px;font-size:13.33px;line-height:17px;font-weight:700;-webkit-text-stroke:0.3px #000;color:#000000;transform:scaleX(0.9638)">Financial dimensions</span>
<span class="t" style="left:32.45px;top:208px;font-size:12px;line-height:16px;font-weight:700;-webkit-text-stroke:0.3px #000;color:#000000;transform:scaleX(0.9813)">Vendor</span>
<span class="t" style="left:32.07px;top:424px;font-size:12px;line-height:16px;font-weight:700;-webkit-text-stroke:0.3px #000;color:#000000;transform:scaleX(0.9893)">Default Validity Period</span>
<span class="t" style="left:370.10px;top:208px;font-size:12px;line-height:16px;font-weight:700;-webkit-text-stroke:0.3px #000;color:#000000;transform:scaleX(0.9740)">Status</span>
<span class="t" style="left:369.96px;top:268px;font-size:12px;line-height:16px;font-weight:700;-webkit-text-stroke:0.3px #000;color:#000000;transform:scaleX(1.0094)">Document</span>
<span class="t" style="left:369.97px;top:484px;font-size:12px;line-height:16px;font-weight:700;-webkit-text-stroke:0.3px #000;color:#000000;transform:scaleX(0.9839)">Project</span>
<span class="t" style="left:31.81px;top:232px;font-size:12px;line-height:16px;-webkit-text-stroke:0.18px;color:#434343;transform:scaleX(1.0086)">Name:</span>
<span class="t" style="left:32.46px;top:258px;font-size:12px;line-height:16px;-webkit-text-stroke:0.18px;color:#434343;transform:scaleX(1.0037)">Vendor account:</span>
<span class="t" style="left:32.10px;top:284px;font-size:12px;line-height:16px;-webkit-text-stroke:0.18px;color:#434343;transform:scaleX(1.0194)">Contact:</span>
<span class="t" style="left:32.47px;top:310px;font-size:12px;line-height:16px;-webkit-text-stroke:0.18px;color:#434343;transform:scaleX(0.9750)">Vendor reference:</span>
<span class="t" style="left:31.53px;top:336px;font-size:12px;line-height:16px;-webkit-text-stroke:0.18px;color:#434343;transform:scaleX(1.0146)">Invoice account:</span>
<span class="t" style="left:32.11px;top:362px;font-size:12px;line-height:16px;-webkit-text-stroke:0.18px;color:#434343;transform:scaleX(0.9848)">Currency:</span>
<span class="t" style="left:31.83px;top:388px;font-size:12px;line-height:16px;-webkit-text-stroke:0.18px;color:#434343;transform:scaleX(0.9830)">Language:</span>
<span class="t" style="left:32.46px;top:448px;font-size:12px;line-height:16px;-webkit-text-stroke:0.18px;color:#434343;transform:scaleX(1.0220)">Validity period for:</span>
<span class="t" style="left:31.83px;top:474px;font-size:12px;line-height:16px;-webkit-text-stroke:0.18px;color:#434343;transform:scaleX(0.9860)">Effective date:</span>
<span class="t" style="left:31.83px;top:500px;font-size:12px;line-height:16px;-webkit-text-stroke:0.18px;color:#434343;transform:scaleX(0.9791)">Expiration date:</span>
<span class="t" style="left:369.84px;top:232px;font-size:12px;line-height:16px;-webkit-text-stroke:0.18px;color:#434343;transform:scaleX(0.9636)">Status:</span>
<span class="t" style="left:369.74px;top:292px;font-size:12px;line-height:16px;-webkit-text-stroke:0.18px;color:#434343;transform:scaleX(0.9682)">Purchase agreement ID:</span>
<span class="t" style="left:369.69px;top:318px;font-size:12px;line-height:16px;-webkit-text-stroke:0.18px;color:#434343;transform:scaleX(1.0410)">Document title:</span>
<span class="t" style="left:369.75px;top:344px;font-size:12px;line-height:16px;-webkit-text-stroke:0.18px;color:#434343;transform:scaleX(0.9632)">Preparer:</span>
<span class="t" style="left:369.73px;top:370px;font-size:12px;line-height:16px;-webkit-text-stroke:0.18px;color:#434343;transform:scaleX(0.9845)">External document reference:</span>
<span class="t" style="left:369.68px;top:396px;font-size:12px;line-height:16px;-webkit-text-stroke:0.18px;color:#434343;transform:scaleX(1.0462)">Default commitment:</span>
<span class="t" style="left:369.41px;top:422px;font-size:12px;line-height:16px;-webkit-text-stroke:0.18px;color:#434343;transform:scaleX(1.0359)">Intercompany origin:</span>
<span class="t" style="left:369.73px;top:448px;font-size:12px;line-height:16px;-webkit-text-stroke:0.18px;color:#434343;transform:scaleX(0.9838)">Purchase agreement classification:</span>
<span class="t" style="left:369.74px;top:508px;font-size:12px;line-height:16px;-webkit-text-stroke:0.18px;color:#434343;transform:scaleX(0.9728)">Project ID:</span>
<span class="t" style="left:139.17px;top:232px;font-size:12px;line-height:16px;-webkit-text-stroke:0.18px;color:#000000;transform:scaleX(0.9873)">Acme Office Supplies</span>
<span class="t" style="left:138.63px;top:258px;font-size:12px;line-height:16px;-webkit-text-stroke:0.18px;color:#000000;transform:scaleX(0.8971)">1001</span>
<span class="t" style="left:138.63px;top:336px;font-size:12px;line-height:16px;-webkit-text-stroke:0.18px;color:#000000;transform:scaleX(0.8971)">1001</span>
<span class="t" style="left:138.64px;top:362px;font-size:12px;line-height:16px;-webkit-text-stroke:0.18px;color:#000000;transform:scaleX(0.8838)">USD</span>
<span class="t" style="left:138.89px;top:388px;font-size:12px;line-height:16px;-webkit-text-stroke:0.18px;color:#000000;transform:scaleX(1.0220)">en-us</span>
<span class="t" style="left:138.54px;top:448px;font-size:12px;line-height:16px;-webkit-text-stroke:0.18px;color:#000000;transform:scaleX(0.9709)">Requested delivery date</span>
<span class="t" style="left:140.25px;top:474px;font-size:12px;line-height:16px;-webkit-text-stroke:0.18px;color:#000000;transform:scaleX(1.0041)">11/2/2016</span>
<span class="t" style="left:559.72px;top:234px;font-size:12px;line-height:16px;-webkit-text-stroke:0.18px;color:#000000;transform:scaleX(0.9955)">Effective</span>
<span class="t" style="left:561.88px;top:292px;font-size:12px;line-height:16px;-webkit-text-stroke:0.18px;color:#000000;transform:scaleX(0.8913)">000001</span>
<span class="t" style="left:562.15px;top:344px;font-size:12px;line-height:16px;-webkit-text-stroke:0.18px;color:#000000;transform:scaleX(1.0541)">Tim Litton</span>
<span class="t" style="left:559.49px;top:398px;font-size:12px;line-height:16px;-webkit-text-stroke:0.18px;color:#000000;transform:scaleX(1.0430)">Product quantity commitment</span>
<span class="t" style="left:561.93px;top:448px;font-size:12px;line-height:16px;-webkit-text-stroke:0.18px;color:#000000;transform:scaleX(0.9485)">General purchases</span>
<span class="t" style="left:1294.01px;top:542px;font-size:12px;line-height:16px;-webkit-text-stroke:0.18px;color:#000000;transform:scaleX(0.9963)">Contoso Entertainment</span>
<span class="t" style="left:1419.91px;top:542px;font-size:12px;line-height:16px;-webkit-text-stroke:0.18px;color:#000000;transform:scaleX(1.0000)">System USA</span>
<span class="t" style="left:1388.73px;top:566px;font-size:12px;line-height:16px;-webkit-text-stroke:0.18px;color:#2f74d8;transform:scaleX(0.9873)">Net30</span>

<div class="a" style="left:1422px;top:186px;width:7px;height:20px;overflow:hidden"><span class="t" style="left:3.5px;top:1.5px;font-size:12px;line-height:17px;color:#000">0</span></div>
</body></html>
